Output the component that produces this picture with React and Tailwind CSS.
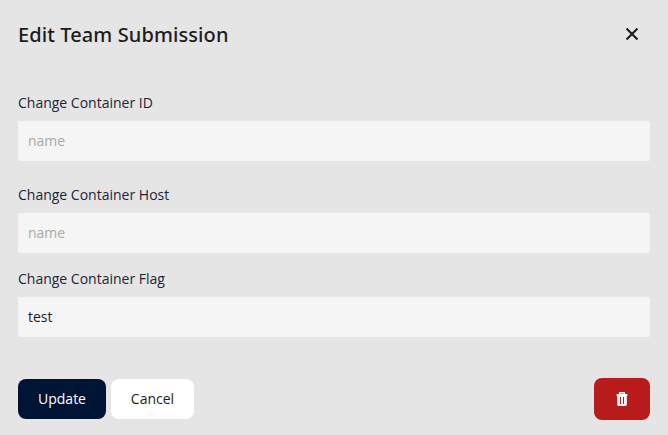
import React from "react";

function Field({ label, placeholder, value, className }) {
  return (
    <div className={className}>
      <label className="block text-sm leading-5 text-[#20263a]">{label}</label>
      <input
        type="text"
        placeholder={placeholder}
        defaultValue={value}
        className="mt-2 block h-10 w-full rounded-[2px] bg-[#f5f5f5] px-2.5 pb-0.5 text-sm text-[#1c1c1c] outline-none placeholder:text-[#a9a9a9]"
      />
    </div>
  );
}

export default function App() {
  return (
    <div className="h-[435px] w-[668px] bg-[#e5e5e5] px-[18px] font-['Open_Sans',sans-serif]">
      <header className="flex h-[68px] items-center justify-between">
        <h2 className="pt-0.5 font-['Noto_Sans',sans-serif] text-xl font-medium tracking-[0.1px] text-[#1c1c1c]">Edit Team Submission</h2>
        <button className="flex size-9 items-center justify-center" aria-label="Close">
          <svg width="14" height="14" viewBox="0 0 14 14" fill="none" stroke="#1a1a1a" strokeWidth="2">
            <path d="M1.5 1.5 12.5 12.5M12.5 1.5 1.5 12.5" />
          </svg>
        </button>
      </header>
      <Field className="mt-[25px]" label="Change Container ID" placeholder="name" />
      <Field className="mt-6" label="Change Container Host" placeholder="name" />
      <Field className="mt-4" label="Change Container Flag" value="test" />
      <footer className="mt-[41px] flex items-center">
        <button className="h-10 w-[88px] rounded-lg bg-[#001435] text-sm text-white">Update</button>
        <button className="ml-[5px] h-10 w-[83px] rounded-lg bg-white text-sm text-[#1c1c1c]">Cancel</button>
        <button className="ml-auto flex h-[42px] w-14 items-center justify-center rounded-lg bg-[#b91c1c]" aria-label="Delete">
          <svg width="12" height="14" viewBox="0 0 12 14" fill="none" stroke="white">
            <path d="M3.7 3V.8h4.6V3" strokeWidth="1.5" strokeLinejoin="round" />
            <path d="M.6 2.9h10.8" strokeWidth="1.8" />
            <path d="M1.2 3h9.6v9.6a1.3 1.3 0 0 1-1.3 1.3H2.5a1.3 1.3 0 0 1-1.3-1.3Z" fill="white" stroke="none" />
            <path d="M4.5 5v7M7.5 5v7" stroke="#b91c1c" strokeWidth="1.1" />
          </svg>
        </button>
      </footer>
    </div>
  );
}
